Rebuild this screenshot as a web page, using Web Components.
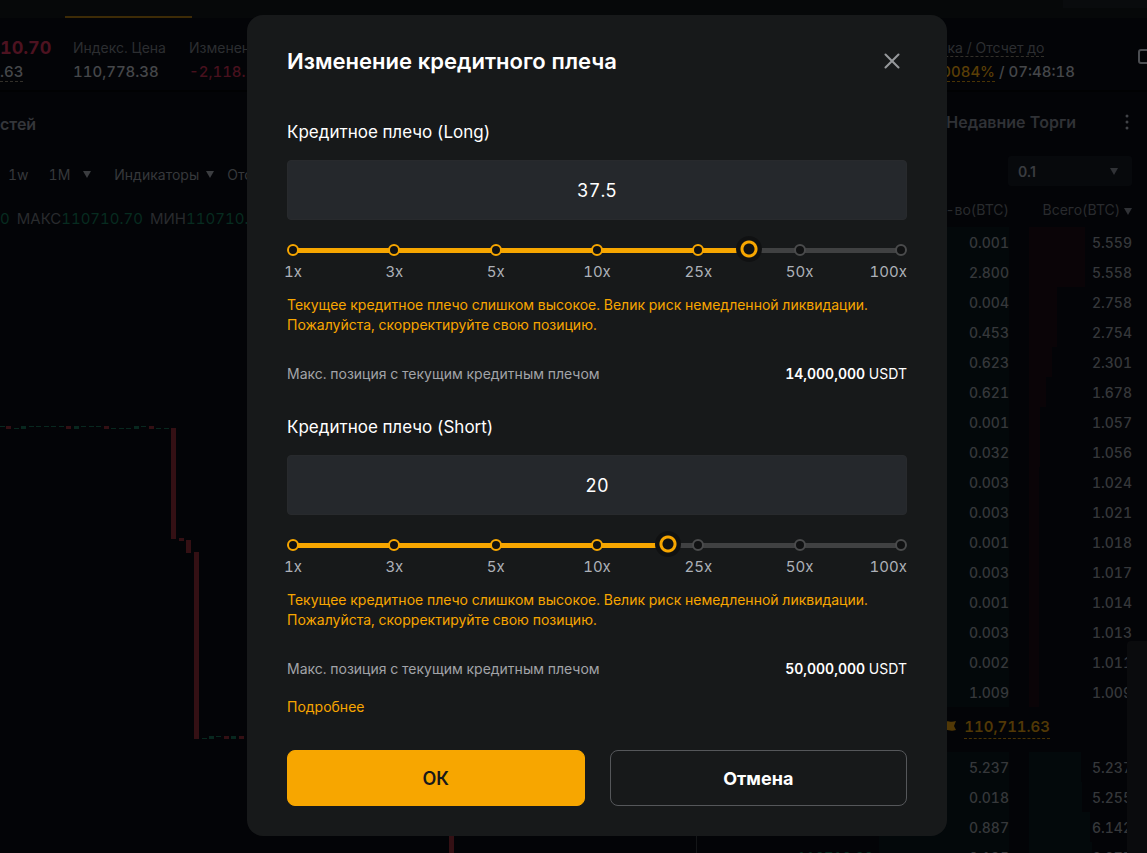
<!DOCTYPE html>
<html lang="ru">
<head>
<meta charset="utf-8">
<meta name="viewport" content="width=device-width, initial-scale=1">
<title>Изменение кредитного плеча</title>
<style>
    body {
        margin: 0;
        height: 100vh;
        overflow: hidden;
        background: #030407;
        color: #2c2e31;
        font-family: Inter, "Noto Sans", sans-serif;
        font-size: 14px;
        font-variant-numeric: tabular-nums;
        --amber: #f7a600;
        --surface: #17191a;
    }
</style>
</head>
<body>
<trade-page>
    <market-ticker slot="ticker"></market-ticker>
    <chart-panel slot="chart"></chart-panel>
    <order-book slot="book"></order-book>
</trade-page>
<leverage-dialog heading="Изменение кредитного плеча">
    <leverage-control label="Кредитное плечо (Long)" value="37.5" position="4.5" limit="14,000,000"></leverage-control>
    <leverage-control label="Кредитное плечо (Short)" value="20" position="3.7" limit="50,000,000"></leverage-control>
</leverage-dialog>

<script>
class TradePage extends HTMLElement {
    connectedCallback() {
        this.attachShadow({ mode: "open" }).innerHTML = `
        <style>
            :host {
                display: grid;
                grid-template-rows: 18px 74px 1fr;
                grid-template-columns: 1fr 451px;
                height: 100vh;
                overflow: hidden;
            }
            nav {
                grid-column: 1 / -1;
                display: flex;
                justify-content: space-between;
                background: #060809;
            }
            .tab {
                width: 127px;
                margin-left: 65px;
                border-bottom: 2px solid #3d2b06;
            }
            .account {
                width: 84px;
                height: 8px;
                background: #090b0d;
            }
            .ticker {
                grid-column: 1 / -1;
                border-bottom: 2px solid #010203;
                overflow: hidden;
            }
            .book {
                border-left: 1px solid #141618;
                overflow: hidden;
            }
            .drawer {
                position: absolute;
                right: 0;
                bottom: 0;
                width: 20px;
                height: 212px;
                border-radius: 4px 0 0 0;
                background: #0a0b0d;
            }
        </style>
        <nav><div class="tab"></div><div class="account"></div></nav>
        <div class="ticker"><slot name="ticker"></slot></div>
        <div><slot name="chart"></slot></div>
        <div class="book"><slot name="book"></slot></div>
        <div class="drawer"></div>`;
    }
}

class MarketTicker extends HTMLElement {
    connectedCallback() {
        this.attachShadow({ mode: "open" }).innerHTML = `
        <style>
            :host {
                display: flex;
                justify-content: space-between;
                padding-top: 18px;
                line-height: 24px;
                white-space: nowrap;
            }
            .stats, .right { display: flex; }
            .stats { gap: 23px; }
            .cell b { display: block; font-size: 15px; font-weight: 500; color: #45474a; }
            .price { width: 50px; }
            .price strong { display: block; font-size: 18px; color: #4d1220; }
            .price b span, .hint { border-bottom: 1px dashed #33302a; }
            .cell .down { color: #48111e; }
            .rate { color: #5a3e06; border-bottom: 1px dashed #4a3405; }
            .right { gap: 62px; }
            .funding { width: 160px; }
            .funding b { text-align: right; }
            svg { margin-top: 8px; }
        </style>
        <div class="stats">
            <div class="cell price"><strong>10.70</strong><b><span>.63</span></b></div>
            <div class="cell">Индекс. Цена<b>110,778.38</b></div>
            <div class="cell">Изменение<b class="down">-2,118.10</b></div>
        </div>
        <div class="right">
            <div class="cell funding"><span class="hint">Ставка / Отсчет до</span><b><span class="rate">0.0084%</span> / 07:48:18</b></div>
            <svg width="10" height="24" fill="none" stroke="#4c4e52" stroke-width="2"><rect x="2" y="6" width="14" height="13" rx="2"/></svg>
        </div>`;
    }
}

// [x, y, height, direction] of each candle, in chart pixels
const CANDLES = [
    [0, 191, 1, 1], [6, 191, 3, 0], [14, 193, 1, 1], [21, 191, 3, 1], [29, 191, 1, 1], [36, 191, 1, 1],
    [44, 191, 1, 1], [51, 191, 1, 1], [59, 191, 1, 1], [66, 191, 3, 0], [74, 191, 3, 1], [81, 191, 1, 1],
    [89, 191, 1, 1], [96, 191, 1, 1], [104, 191, 3, 0], [111, 193, 1, 1], [119, 193, 1, 1], [126, 193, 1, 1],
    [134, 191, 3, 1], [141, 191, 1, 1], [149, 191, 3, 0], [156, 193, 1, 1], [164, 193, 1, 1],
    [171, 193, 111, 0], [179, 303, 3, 0], [186, 305, 13, 0], [194, 317, 187, 0],
    [202, 503, 1, 1], [209, 501, 3, 1], [216, 501, 1, 1], [224, 501, 3, 0], [231, 501, 3, 1], [239, 501, 3, 0],
    [449, 501, 120, 0]
];

class ChartPanel extends HTMLElement {
    connectedCallback() {
        const bars = CANDLES.map(([x, y, h, up]) =>
            `<rect x="${x}" y="${y}" width="5" height="${h}" fill="${up ? "#08281f" : "#341014"}"/>`).join("");
        this.attachShadow({ mode: "open" }).innerHTML = `
        <style>
            :host { display: block; white-space: nowrap; }
            h2 { margin: 0; padding: 20px 0; font-size: 16px; line-height: 24px; font-weight: 600; color: #34363a; }
            .tools, .ohlc { display: flex; align-items: center; }
            .tools { height: 36px; padding-left: 8px; gap: 20px; color: #36383b; }
            .tools .more { margin-left: -7px; }
            .tools span { display: flex; align-items: center; gap: 7px; }
            .arrow { width: 0; border: 4px solid transparent; border-top: 7px solid #3b3d40; border-bottom: 0; }
            .tools .wide { margin: 0 -7px 0 3px; }
            .ohlc { height: 24px; padding: 14px 0 5px; gap: 7px; font-size: 15px; color: #292b2e; }
            .ohlc em { font-style: normal; color: #072c20; }
            svg { display: block; width: 100%; height: 620px; }
        </style>
        <h2>стей</h2>
        <div class="tools"><span>1w</span><span>1M</span><i class="arrow more"></i><span class="wide">Индикаторы <i class="arrow"></i></span><span>Отображение</span></div>
        <div class="ohlc"><em>0</em><span>МАКС<em>110710.70</em></span><span>МИН<em>110710.70</em></span></div>
        <svg>${bars}</svg>`;
    }
}

const ASKS = [
    ["0.001", "5.559"], ["2.800", "5.558"], ["0.004", "2.758"], ["0.453", "2.754"],
    ["0.623", "2.301"], ["0.621", "1.678"], ["0.001", "1.057"], ["0.032", "1.056"],
    ["0.003", "1.024"], ["0.003", "1.021"], ["0.001", "1.018"], ["0.003", "1.017"],
    ["0.001", "1.014"], ["0.003", "1.013"], ["0.002", "1.011"], ["1.009", "1.009"]
];
const BIDS = [["", "5.237", "5.237"], ["", "0.018", "5.255"], ["", "0.887", "6.142"], ["110710.80", "0.135", "6.277"]];

class OrderBook extends HTMLElement {
    connectedCallback() {
        const row = (price, size, total, side) => `
            <tr class="${side}"><td class="quote">${price}</td><td class="size">${size}</td>
            <td class="total" style="--depth:${Math.round(total * 10)}px">${total}</td></tr>`;
        this.attachShadow({ mode: "open" }).innerHTML = `
        <style>
            :host { display: block; padding: 0 15px 0 100px; white-space: nowrap; }
            header { display: flex; justify-content: flex-end; align-items: center; gap: 46px; height: 60px; }
            h2 { margin: 0; font-size: 16px; font-weight: 600; color: #303236; }
            .filter { display: flex; justify-content: flex-end; padding: 4px 0 10px; }
            select {
                appearance: none;
                width: 124px;
                height: 30px;
                padding: 0 10px;
                border: 0;
                border-radius: 3px;
                font: 600 14px Inter, sans-serif;
                color: #3a3c40;
                background: #07090c;
            }
            label { display: grid; grid-template-columns: 1fr 22px; align-items: center; }
            label select { grid-area: 1 / 1 / 2 / 3; }
            .arrow { display: inline-block; width: 0; border: 4px solid transparent; border-top: 7px solid #303236; border-bottom: 0; }
            label .arrow { grid-area: 1 / 2; pointer-events: none; }
            table { width: 100%; border-collapse: collapse; table-layout: fixed; text-align: right; }
            th, td { padding: 0; height: 30px; font-weight: 400; }
            th { box-sizing: border-box; height: 31px; padding-bottom: 4px; color: #292b2e; }
            th:nth-child(2) { width: 130px; }
            th:nth-child(3) { width: 123px; }
            td { font-weight: 500; color: #36383b; }
            .quote { text-align: left; color: #072c20; }
            .size { background: #03080a; }
            .total { background: linear-gradient(var(--bar), var(--bar)) 20px 0 / var(--depth) 100% no-repeat; }
            .ask { --bar: #0a0407; }
            .bid { --bar: #03090b; }
            .mark { display: flex; align-items: center; justify-content: flex-end; gap: 7px; height: 40px; padding: 0 82px 5px 0; font-size: 15px; color: #513806; }
            .mark span { border-bottom: 1px dashed #493305; line-height: 22px; font-weight: 600; }
        </style>
        <header>
            <h2>Недавние Торги</h2>
            <svg width="10" height="16" fill="#414347"><circle cx="5" cy="2" r="1.5"/><circle cx="5" cy="8" r="1.5"/><circle cx="5" cy="14" r="1.5"/></svg>
        </header>
        <div class="filter"><label><select aria-label="Шаг цены"><option>0.1</option></select><i class="arrow"></i></label></div>
        <table>
            <thead><tr><th></th><th>Кол-во(BTC)</th><th>Всего(BTC) <i class="arrow"></i></th></tr></thead>
            <tbody>
                ${ASKS.map(r => row("", r[0], r[1], "ask")).join("")}
                <tr><td colspan="3"><div class="mark">
                    <svg width="16" height="14" fill="#513806"><path d="M1 1h2v13H1zM3 2c4-2 6 1 12-1l-2 5 2 4C9 12 7 9 3 10z"/></svg>
                    <span>110,711.63</span></div></td></tr>
                ${BIDS.map(r => row(r[0], r[1], r[2], "bid")).join("")}
            </tbody>
        </table>`;
    }
}

const STOPS = ["1x", "3x", "5x", "10x", "25x", "50x", "100x"];

class LeverageControl extends HTMLElement {
    connectedCallback() {
        this.position = Number(this.getAttribute("position"));
        this._render();
        this.shadowRoot.querySelector("#range").addEventListener("input", (e) => {
            this.position = Number(e.target.value);
            this._paint();
            this.shadowRoot.querySelector("#amount").value = this._leverage();
        });
        this._paint();
    }

    // leverage is linear between two neighbouring stops
    _leverage() {
        const low = Math.min(Math.floor(this.position), STOPS.length - 2);
        const a = parseFloat(STOPS[low]);
        const b = parseFloat(STOPS[low + 1]);
        return Math.round((a + (b - a) * (this.position - low)) * 10) / 10;
    }

    _paint() {
        const track = this.shadowRoot.querySelector(".slider");
        track.style.setProperty("--fill", `${this.position / (STOPS.length - 1) * 100}%`);
        this.shadowRoot.querySelectorAll(".dots i").forEach((dot, i) => {
            dot.classList.toggle("on", i <= this.position);
        });
    }

    _render() {
        this.attachShadow({ mode: "open" }).innerHTML = `
        <style>
            :host { display: block; }
            .label { display: block; margin-bottom: 16px; font-size: 17px; line-height: 24px; color: #fff; }
            #amount {
                display: block;
                box-sizing: border-box;
                width: 100%;
                height: 60px;
                margin-bottom: 20px;
                border: 1px solid #282a2d;
                border-radius: 4px;
                background: #25282c;
                color: #fff;
                font: inherit;
                font-size: 18px;
                text-align: center;
                outline: none;
            }
            .slider { display: grid; height: 20px; align-items: center; }
            .slider > * { grid-area: 1 / 1; }
            .track {
                height: 5px;
                margin: 0 6px;
                background: linear-gradient(var(--amber), var(--amber)) 0 0 / var(--fill) 100% no-repeat #404142;
            }
            .dots { display: flex; justify-content: space-between; }
            .dots i {
                box-sizing: border-box;
                width: 12px;
                height: 12px;
                border: 2px solid #4a4b4c;
                border-radius: 50%;
                background: #101112;
            }
            .dots .on { border-color: var(--amber); }
            #range {
                appearance: none;
                width: calc(100% + 14px);
                height: 26px;
                margin: -4px -7px -2px;
                background: none;
                cursor: pointer;
            }
            #range::-webkit-slider-thumb {
                appearance: none;
                width: 26px;
                height: 26px;
                border-radius: 50%;
                background: radial-gradient(circle, #101112 5px, var(--amber) 6px, var(--amber) 8px, #101112 9px);
            }
            .scale { display: flex; justify-content: space-between; font-size: 15px; line-height: 24px; color: #adb1b8; }
            .scale span { display: flex; justify-content: center; width: 12px; }
            .scale span:last-child { justify-content: flex-end; }
            p { margin: 11px 0 27px; line-height: 20px; color: var(--amber); }
            .limit { display: flex; justify-content: space-between; line-height: 24px; color: #a2a4a8; }
            .limit span { color: #fff; }
            .limit b { font-weight: 600; }
        </style>
        <label class="label" for="amount">${this.getAttribute("label")}</label>
        <input id="amount" type="text" value="${this.getAttribute("value")}">
        <div class="slider">
            <div class="track"></div>
            <div class="dots">${STOPS.map(() => "<i></i>").join("")}</div>
            <input id="range" type="range" min="0" max="6" step="any" value="${this.position}" aria-label="${this.getAttribute("label")}">
        </div>
        <div class="scale">${STOPS.map(s => `<span>${s}</span>`).join("")}</div>
        <p>Текущее кредитное плечо слишком высокое. Велик риск немедленной ликвидации. Пожалуйста, скорректируйте свою позицию.</p>
        <div class="limit">Макс. позиция с текущим кредитным плечом<span><b>${this.getAttribute("limit")}</b> USDT</span></div>`;
    }
}

class LeverageDialog extends HTMLElement {
    connectedCallback() {
        this.attachShadow({ mode: "open" }).innerHTML = `
        <style>
            :host {
                position: fixed;
                inset: 0;
                display: flex;
                justify-content: center;
                align-items: flex-start;
                padding: 15px 0 0 47px;
            }
            section {
                box-sizing: border-box;
                width: 700px;
                max-width: 100%;
                padding: 30px 40px;
                border-radius: 16px;
                background: var(--surface);
            }
            header { display: flex; justify-content: space-between; align-items: center; margin-bottom: 43px; }
            h1 { margin: 0; font-size: 22px; line-height: 32px; font-weight: 600; color: #fff; }
            .close { display: flex; padding: 7px; border: 0; background: none; cursor: pointer; }
            .body { display: flex; flex-direction: column; gap: 29px; }
            a { display: inline-block; margin: 16px 0 33px; line-height: 20px; color: var(--amber); text-decoration: none; }
            .actions { display: grid; grid-template-columns: 1fr 1fr; gap: 25px; }
            .actions button {
                height: 56px;
                border: 1px solid #55575a;
                border-radius: 8px;
                background: none;
                color: #fff;
                font: inherit;
                font-size: 18px;
                font-weight: 700;
                cursor: pointer;
            }
            .actions .primary { border-color: var(--amber); background: var(--amber); color: #17181a; font-weight: 600; }
        </style>
        <section role="dialog" aria-label="${this.getAttribute("heading")}">
            <header>
                <h1>${this.getAttribute("heading")}</h1>
                <button class="close" aria-label="Закрыть">
                    <svg width="16" height="16" stroke="#96989b" stroke-width="2" stroke-linecap="round"><path d="M1.500 1.500l13 13M14.500 1.500l-13 13"/></svg>
                </button>
            </header>
            <div class="body"><slot></slot></div>
            <a href="#">Подробнее</a>
            <div class="actions">
                <button class="primary">ОК</button>
                <button>Отмена</button>
            </div>
        </section>`;
    }
}

customElements.define("trade-page", TradePage);
customElements.define("market-ticker", MarketTicker);
customElements.define("chart-panel", ChartPanel);
customElements.define("order-book", OrderBook);
customElements.define("leverage-control", LeverageControl);
customElements.define("leverage-dialog", LeverageDialog);
</script>
</body>
</html>
